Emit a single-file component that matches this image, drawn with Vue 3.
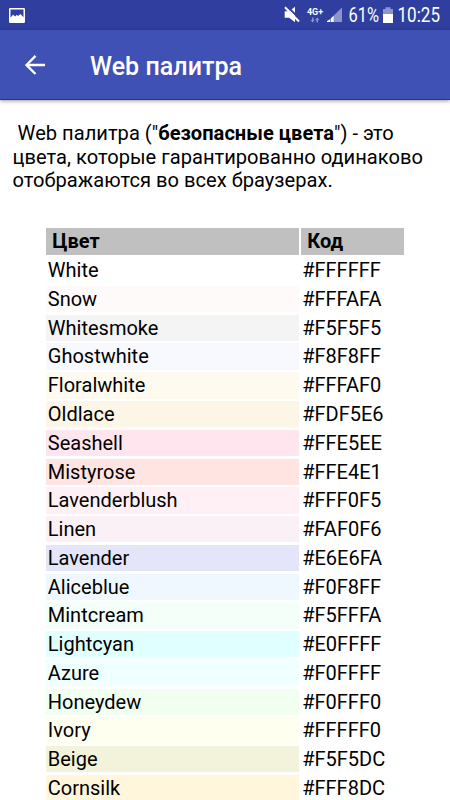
<script setup>
const colors = [
	{ name: "White", code: "#FFFFFF", bg: "#ffffff" },
	{ name: "Snow", code: "#FFFAFA", bg: "#fffafa" },
	{ name: "Whitesmoke", code: "#F5F5F5", bg: "#f4f4f4" },
	{ name: "Ghostwhite", code: "#F8F8FF", bg: "#f8f8ff" },
	{ name: "Floralwhite", code: "#FFFAF0", bg: "#fffaf0" },
	{ name: "Oldlace", code: "#FDF5E6", bg: "#fdf5e6" },
	{ name: "Seashell", code: "#FFE5EE", bg: "#ffe5ee" },
	{ name: "Mistyrose", code: "#FFE4E1", bg: "#ffe4e1" },
	{ name: "Lavenderblush", code: "#FFF0F5", bg: "#fff0f5" },
	{ name: "Linen", code: "#FAF0F6", bg: "#faf0f6" },
	{ name: "Lavender", code: "#E6E6FA", bg: "#e4e5f9" },
	{ name: "Aliceblue", code: "#F0F8FF", bg: "#f0f8ff" },
	{ name: "Mintcream", code: "#F5FFFA", bg: "#f5fffa" },
	{ name: "Lightcyan", code: "#E0FFFF", bg: "#e0ffff" },
	{ name: "Azure", code: "#F0FFFF", bg: "#f0ffff" },
	{ name: "Honeydew", code: "#F0FFF0", bg: "#f0fff0" },
	{ name: "Ivory", code: "#FFFFF0", bg: "#fffff0" },
	{ name: "Beige", code: "#F5F5DC", bg: "#f3f3dc" },
	{ name: "Cornsilk", code: "#FFF8DC", bg: "#fff6dc" },
];
</script>

<template>
	<div class="screen">
		<div class="status-bar">
			<svg class="picture" width="16" height="15" viewBox="0 0 16 15">
				<path
					fill="#fff"
					fill-rule="evenodd"
					d="M1.2 0h13.6q1.2 0 1.2 1.2v12.6q0 1.2-1.2 1.2H1.2Q0 15 0 13.8V1.2Q0 0 1.2 0zM1.500 1.500v8l2.700-2.700 2 1.800 1.500-1.800 1.300 1.300L11.500 6l3 3.300V1.500z"
				/>
			</svg>
			<svg class="indicators" width="170" height="30" viewBox="0 0 170 30">
				<path fill="#fff" d="M4.700 11.300h4.500l5.800-4.500v15.400l-5.800-4.400H4.700z" />
				<path stroke="#303f9f" stroke-width="1.800" d="M6.800 6l14 14" />
				<path stroke="#fff" stroke-width="2" d="M5 7.300l14 14.200" />
				<text x="27" y="15" class="net" textLength="16" lengthAdjust="spacingAndGlyphs">4G+</text>
				<g fill="#8c94ca">
					<path d="M32 17.500h1.500V20h1.300l-2.200 2.500L30.500 20H32z" />
					<path d="M36.500 22.500H38V20h1.500l-2.200-2.500L35 20h1.500z" />
					<path d="M62 7.500V22H47z" />
				</g>
				<path fill="#fff" d="M50 19.500V22h-3v-1zM51 18.500l2.600-2.800V22H51z" />
				<text x="68.500" y="22" class="time" textLength="30.500" lengthAdjust="spacingAndGlyphs">61%</text>
				<path fill="#8c94ca" d="M105.500 7.300h5V9h2.500v6h-10V9h2.500z" />
				<path fill="#fff" d="M103 14h10v9h-10z" />
				<text x="117.500" y="22" class="time" textLength="42.500" lengthAdjust="spacingAndGlyphs">10:25</text>
			</svg>
		</div>
		<header class="app-bar">
			<svg class="back" width="20" height="20" viewBox="0 0 20 20">
				<path d="M10.500.900L1.500 10l9 9M1.500 10H20" fill="none" stroke="#fff" stroke-width="2.300" />
			</svg>
			<h1 class="tit">Web палитра</h1>
		</header>
		<main class="content">
			<p class="intro">
				&nbsp;Web палитра ("<b>безопасные цвета</b>") - это<br />
				цвета, которые гарантированно одинаково<br />
				отображаются во всех браузерах.
			</p>
			<div class="palette">
				<div class="head">Цвет</div>
				<div class="head">Код</div>
				<template v-for="color in colors" :key="color.name">
					<div class="cell" :style="{ backgroundColor: color.bg }">{{ color.name }}</div>
					<div class="cell code">{{ color.code }}</div>
				</template>
			</div>
		</main>
	</div>
</template>

<style>
body {
	margin: 0;
	overflow: hidden;
}
</style>

<style scoped>
.screen {
	width: 450px;
	height: 800px;
	overflow: hidden;
	background-color: #fff;
	color: #000;
	font-family: Roboto, "Liberation Sans", sans-serif;
}

.status-bar {
	display: flex;
	justify-content: space-between;
	height: 30px;
	background-color: #303f9f;
}

.picture {
	margin: 8px 0 0 9px;
}

.net {
	fill: #fff;
	font-size: 9.5px;
	font-weight: 700;
}

.time {
	fill: #fff;
	font-size: 19.5px;
}

.app-bar {
	display: flex;
	align-items: center;
	box-sizing: border-box;
	height: 70px;
	padding-left: 25px;
	border-bottom: 1px solid #1737a5;
	background-color: #3f51b5;
	box-shadow: 0 1px 4px rgba(0, 0, 0, 0.4);
}

.tit {
	margin: 4px 0 0 45px;
	font-size: 25px;
	font-weight: 500;
	line-height: 30px;
	letter-spacing: 0.05px;
	color: #fff;
}

.content {
	padding: 22px 12px 0;
}

.intro {
	margin: 0 0 0 0.6px;
	font-size: 20.1px;
	line-height: 23.7px;
	letter-spacing: 0.015px;
	white-space: nowrap;
}

.palette {
	display: grid;
	grid-template-columns: 252.5px 103px;
	grid-auto-rows: 26.3px;
	gap: 2.47px;
	margin: 35.3px 0 0 34.3px;
	font-size: 20px;
	line-height: 26.3px;
}

.head {
	padding-left: 6px;
	background-color: #c0c0c0;
	font-weight: 700;
}

.cell {
	padding-left: 1.5px;
}

.code {
	padding-left: 0.9px;
}
</style>
